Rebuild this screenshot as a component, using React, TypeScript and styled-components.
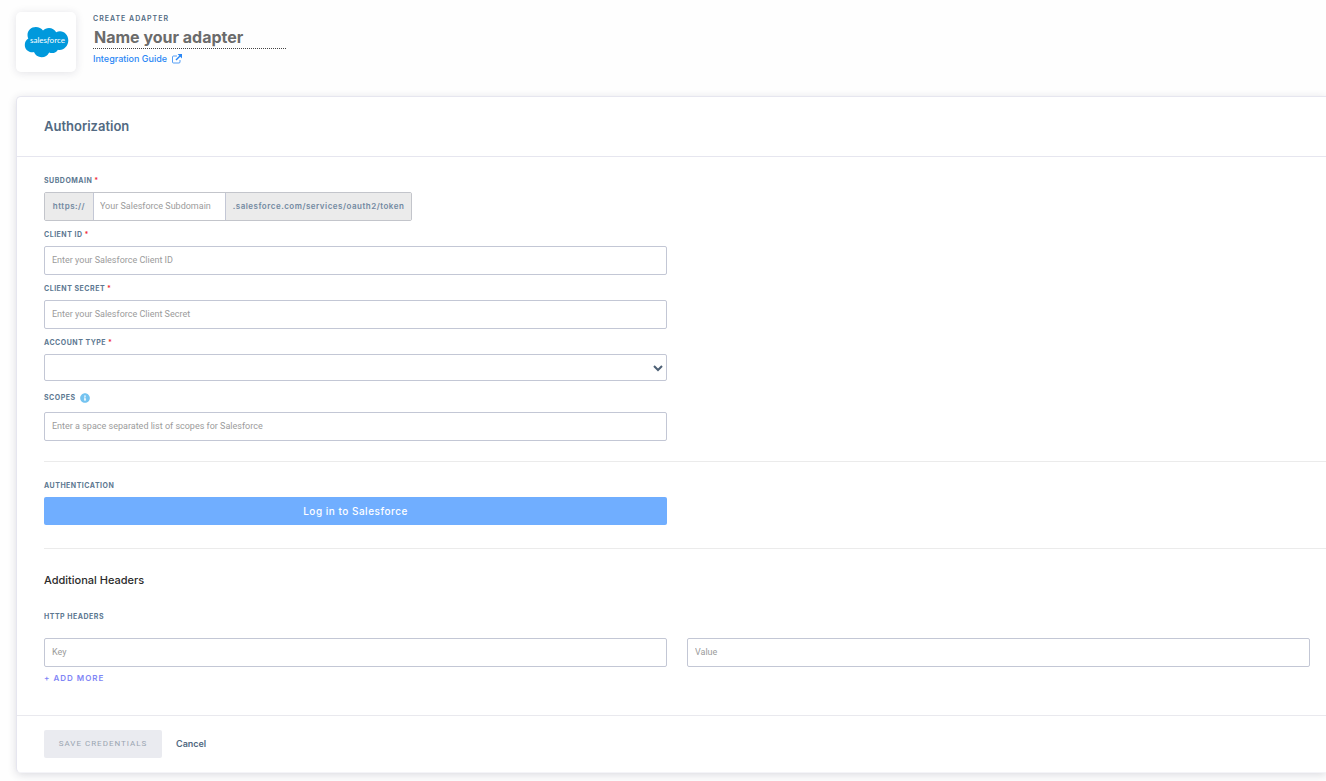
import React from "react";
import styled, { createGlobalStyle, css } from "styled-components";
import { FaInfoCircle } from "react-icons/fa";

const GlobalStyle = createGlobalStyle`
  *, *::before, *::after { box-sizing: border-box; }
  body {
    margin: 0;
    background: #fefefe;
    overflow-x: hidden;
    font-family: Inter, "Liberation Sans", sans-serif;
    color: #526a82;
  }
  button, input, select { font-family: inherit; }
`;

const Page = styled.div`
  padding: 12px 0 8px 16px;
`;

const Header = styled.header`
  display: flex;
  gap: 17px;
  margin-bottom: 24px;
`;

const LogoTile = styled.div`
  display: flex;
  align-items: center;
  justify-content: center;
  width: 60px;
  height: 60px;
  border-radius: 5px;
  background: #fff;
  box-shadow: 0 1px 8px rgba(40, 40, 70, 0.13);
`;

const HeaderText = styled.div`
  display: flex;
  flex-direction: column;
  align-items: flex-start;
  padding-top: 1px;
`;

const Eyebrow = styled.label`
  font-size: 7px;
  line-height: 12px;
  font-weight: 600;
  letter-spacing: 1px;
`;

const NameInput = styled.input`
  width: 193px;
  height: 24px;
  padding: 0 1px;
  border: 0;
  border-bottom: 1px dotted #444;
  background: transparent;
  font-size: 16px;
  font-weight: 700;
  outline: none;
  &::placeholder { color: #6b6b6b; opacity: 1; }
`;

const GuideLink = styled.a`
  display: flex;
  align-items: center;
  gap: 5px;
  height: 19px;
  color: #2a87f5;
  font-size: 9px;
  font-weight: 500;
  text-decoration: none;
`;

const Card = styled.form`
  border: 1px solid #e6e6ef;
  border-right: 0;
  border-bottom-color: #f4f4f8;
  border-radius: 5px 0 0 5px;
  background: #fff;
  box-shadow: 0 2px 8px rgba(40, 40, 70, 0.16);
`;

const CardHeader = styled.div`
  padding: 18px 27px 19px;
  border-bottom: 1px solid #e6e6ef;
`;

const CardTitle = styled.h2`
  margin: 0;
  font-size: 13px;
  line-height: 22px;
  font-weight: 600;
`;

const Section = styled.section<{ $divided?: boolean }>`
  margin-left: 27px;
  ${(p) => p.$divided && css`border-top: 1px solid #ebebeb;`}
`;

const Columns = styled.div`
  display: grid;
  grid-template-columns: 1fr 1fr;
  column-gap: 20px;
  padding-right: 16px;
`;

const Field = styled.div`
  display: flex;
  flex-direction: column;
  margin-bottom: 6px;
`;

const labelText = css`
  display: flex;
  align-items: center;
  gap: 2px;
  height: 15px;
  margin-bottom: 4px;
  color: #5d7891;
  font-size: 7px;
  font-weight: 700;
  letter-spacing: 0.5px;
`;

const Label = styled.label<{ $withIcon?: boolean }>`
  ${labelText}
  ${(p) => p.$withIcon && css`
    height: 21px;
    gap: 4px;
  `}
`;
const GroupLabel = styled.div<{ $spacious?: boolean }>`
  ${labelText}
  ${(p) => p.$spacious && css`margin-bottom: 14px;`}
`;
const Required = styled.span`color: #f0323c;`;

const inputText = css`
  color: #526a82;
  font-family: Roboto, sans-serif;
  font-size: 9px;
  outline: none;
  &::placeholder { color: #9b9b9b; opacity: 1; }
`;

const control = css`
  ${inputText}
  width: 100%;
  height: 29px;
  padding: 0 7px 1px;
  border: 1px solid #c3c7d5;
  border-radius: 2px;
  background: #fff;
`;

const TextInput = styled.input`${control}`;

const SelectWrap = styled.div`
  display: grid;
  align-items: center;
  > * { grid-area: 1 / 1; }
  > svg { justify-self: end; margin-right: 3px; pointer-events: none; }
`;

const Select = styled.select`
  ${control}
  height: 27px;
  appearance: none;
`;

const InputGroup = styled.div`
  display: grid;
  grid-template-columns: 48px 1fr 185px;
  width: 368px;
  height: 29px;
  border: 1px solid #c3c5cb;
  border-radius: 2px;
`;

const Affix = styled.span`
  display: flex;
  align-items: center;
  justify-content: center;
  padding-bottom: 1px;
  background: #ebebeb;
  color: #7289a1;
  font-size: 8px;
  font-weight: 600;
  letter-spacing: 0.5px;
`;

const GroupInput = styled.input`
  ${inputText}
  min-width: 0;
  padding: 0 6px 1px;
  border: solid #c3c7d5;
  border-width: 0 1px;
  background: #fff;
`;

const LoginButton = styled.button`
  height: 28px;
  border: 0;
  border-radius: 2px;
  background: #70aeff;
  color: #fff;
  font-size: 10px;
  font-weight: 500;
  letter-spacing: 0.5px;
`;

const SectionTitle = styled.h3`
  margin: 0 0 20px;
  color: #2b2b2b;
  font-size: 11px;
  line-height: 18px;
  font-weight: 500;
`;

const AddButton = styled.button`
  display: block;
  padding: 0;
  border: 0;
  background: none;
  color: #7f86f6;
  font-size: 8px;
  line-height: 22px;
  font-weight: 600;
  letter-spacing: 1px;
`;

const Footer = styled.footer`
  display: flex;
  align-items: center;
  gap: 14px;
  padding: 14px 27px;
  border-top: 1px solid #e9e9ee;
`;

const SaveButton = styled.button`
  width: 118px;
  height: 28px;
  padding: 0 0 1px;
  border: 0;
  border-radius: 2px;
  background: #eaebf0;
  color: #9aa5b1;
  font-family: Roboto, sans-serif;
  font-size: 8px;
  letter-spacing: 1px;
`;

const CancelButton = styled.button`
  padding: 0 0 2px;
  border: 0;
  background: none;
  color: #526a82;
  font-size: 9px;
  font-weight: 600;
`;

const Spaced = styled.div<{ $top: number; $bottom: number }>`
  padding-top: ${(p) => p.$top}px;
  padding-bottom: ${(p) => p.$bottom}px;
`;

function SalesforceLogo() {
  return (
    <svg width="46" height="34" viewBox="0 0 46 34" role="img" aria-label="Salesforce">
      <path
        fill="#0099dc"
        transform="translate(1 1)"
        d="M19 4.600C20.500 3 22.600 2 25 2c3.100 0 5.700 1.700 7.200 4.200 1.200-.6 2.400-.9 3.800-.9 4.600 0 8.300 4.100 8.300 9.200s-3.900 9.400-8.600 9.400c-.6 0-1.200-.1-1.800-.2-1.200 2.200-3.400 3.400-5.800 3.400-1.100 0-2.100-.2-3-.7-1.200 3-4.100 4.900-7.500 4.900-3.500 0-6.500-2.100-7.600-5.200-.5.100-1 .200-1.600.200C4.200 26.300.800 23.200.800 19c0-2.800 1.200-5.200 3.500-6.500-.5-1.100-.8-2.300-.8-3.600C3.500 4.500 7.200 1 11.800 1c3.100 0 5.600 1.400 7.200 3.600Z"
      />
      <text x="7" y="18" fontFamily="Lato, sans-serif" fontSize="8" fill="#fff">
        sales<tspan fontStyle="italic">f</tspan>orce
      </text>
    </svg>
  );
}

function OpenIcon() {
  return (
    <svg width="10" height="10" viewBox="0 0 10 10" fill="none" stroke="currentColor" aria-hidden="true">
      <path d="M5 2H1.500a1 1 0 0 0-1 1v5a1 1 0 0 0 1 1H7a1 1 0 0 0 1-1V6" strokeOpacity="0.8" />
      <path d="M4 6 8.500 1.500" strokeWidth="1.400" />
      <path d="M5.600 0H10v4.400Z" fill="currentColor" stroke="none" />
    </svg>
  );
}

function Chevron() {
  return (
    <svg width="12" height="8" viewBox="0 0 12 8" fill="none" stroke="#4d6075" strokeWidth="2" aria-hidden="true">
      <path d="M2 2l4 4 4-4" />
    </svg>
  );
}

function TextField(props: { id: string; label: string; placeholder: string }) {
  return (
    <Field>
      <Label htmlFor={props.id}>
        {props.label} <Required>*</Required>
      </Label>
      <TextInput id={props.id} placeholder={props.placeholder} />
    </Field>
  );
}

export default function App() {
  return (
    <Page>
      <GlobalStyle />
      <Header>
        <LogoTile>
          <SalesforceLogo />
        </LogoTile>
        <HeaderText>
          <Eyebrow htmlFor="name">CREATE ADAPTER</Eyebrow>
          <NameInput id="name" placeholder="Name your adapter" />
          <GuideLink href="#guide">
            Integration Guide <OpenIcon />
          </GuideLink>
        </HeaderText>
      </Header>

      <Card>
        <CardHeader>
          <CardTitle>Authorization</CardTitle>
        </CardHeader>

        <Section>
          <Spaced $top={16} $bottom={14}>
            <Columns>
              <div>
                <Field>
                  <Label htmlFor="subdomain">
                    SUBDOMAIN <Required>*</Required>
                  </Label>
                  <InputGroup>
                    <Affix>https://</Affix>
                    <GroupInput id="subdomain" placeholder="Your Salesforce Subdomain" />
                    <Affix>.salesforce.com/services/oauth2/token</Affix>
                  </InputGroup>
                </Field>
                <TextField id="client-id" label="CLIENT ID" placeholder="Enter your Salesforce Client ID" />
                <TextField id="client-secret" label="CLIENT SECRET" placeholder="Enter your Salesforce Client Secret" />
                <Field>
                  <Label htmlFor="account-type">
                    ACCOUNT TYPE <Required>*</Required>
                  </Label>
                  <SelectWrap>
                    <Select id="account-type" />
                    <Chevron />
                  </SelectWrap>
                </Field>
                <Field>
                  <Label htmlFor="scopes" $withIcon>
                    SCOPES <FaInfoCircle size={10} color="#74c3f0" />
                  </Label>
                  <TextInput id="scopes" placeholder="Enter a space separated list of scopes for Salesforce" />
                </Field>
              </div>
            </Columns>
          </Spaced>
        </Section>

        <Section $divided>
          <Spaced $top={16} $bottom={17}>
            <Columns>
              <Field>
                <GroupLabel>AUTHENTICATION</GroupLabel>
                <LoginButton type="button">Log in to Salesforce</LoginButton>
              </Field>
            </Columns>
          </Spaced>
        </Section>

        <Section $divided>
          <Spaced $top={22} $bottom={26}>
            <SectionTitle>Additional Headers</SectionTitle>
            <GroupLabel $spacious>HTTP HEADERS</GroupLabel>
            <Columns>
              <TextInput aria-label="Header key" placeholder="Key" />
              <TextInput aria-label="Header value" placeholder="Value" />
            </Columns>
            <AddButton type="button">+ ADD MORE</AddButton>
          </Spaced>
        </Section>

        <Footer>
          <SaveButton type="button" disabled>SAVE CREDENTIALS</SaveButton>
          <CancelButton type="button">Cancel</CancelButton>
        </Footer>
      </Card>
    </Page>
  );
}
